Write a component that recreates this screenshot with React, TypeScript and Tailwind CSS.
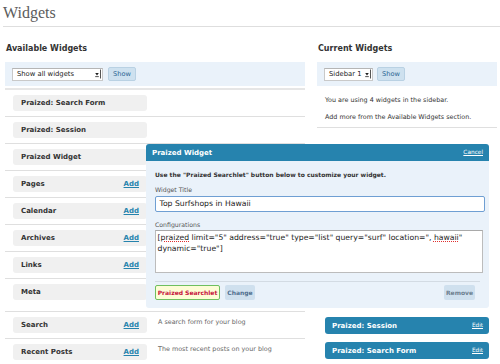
import React from "react";

function SelectBox({ label, className }: { label: string; className: string }) {
  return (
    <div
      className={
        "h-[13px] bg-white border border-[#c9c9c9] border-t-[#b5b5b5] flex items-center justify-between pl-[4px] pr-[1px] text-[6.8px] leading-none text-[#222] " +
        className
      }
    >
      <span>{label}</span>
      <svg width="7" height="10" viewBox="0 0 7 10">
        <path d="M1.2 4 L4.8 4 L3 6.4 Z" fill="#222" />
        <rect x="1.2" y="7.2" width="3.6" height="0.9" fill="#444" />
        <rect x="6" y="0.5" width="1" height="9" fill="#555" />
      </svg>
    </div>
  );
}

function ShowButton() {
  return (
    <div className="h-[14px] w-[28px] flex items-center justify-center rounded-[2px] bg-[#cee1ef] border border-[#b9d1e3] text-[6.6px] leading-none text-[#2a6592]">
      Show
    </div>
  );
}

type Row = { name: string; add?: boolean; desc?: React.ReactNode };

const rows: Row[] = [
  { name: "Praized: Search Form" },
  { name: "Praized: Session" },
  { name: "Praized Widget" },
  { name: "Pages", add: true },
  { name: "Calendar", add: true },
  { name: "Archives", add: true },
  { name: "Links", add: true },
  {
    name: "Meta",
    desc: (
      <>
        Log in/out, admin, feed and
        <br />
        WordPress links
      </>
    ),
  },
  { name: "Search", add: true, desc: "A search form for your blog" },
  { name: "Recent Posts", add: true, desc: "The most recent posts on your blog" },
];

function LeftColumn() {
  return (
    <div className="w-[300px] shrink-0">
      <h3 className="pt-[17px] text-[8px] leading-[10px] font-bold text-[#333] pl-[1px]">Available Widgets</h3>
      <div className="mt-[8px] h-[24px] bg-[#eaf2fa] flex items-center pl-[7px]">
        <SelectBox label="Show all widgets" className="w-[91px]" />
        <div className="ml-[5px]">
          <ShowButton />
        </div>
      </div>
      <ul className="mt-[2px] border-t-2 border-[#e6e6e6]">
        {rows.map((r) => (
          <li key={r.name} className="flex items-start pt-[5px] pb-[5px] border-b border-[#dfdfdf]">
            <div className="ml-[8px] w-[134px] h-[16px] shrink-0 rounded-[3px] bg-[#f0f0f0] flex items-center justify-between pl-[8px] pr-[8px] pt-[1px]">
              <span className="text-[7px] leading-none font-bold text-[#333]">{r.name}</span>
              {r.add && (
                <span className="text-[7px] leading-none font-bold text-[#2583ad] underline">Add</span>
              )}
            </div>
            {r.desc && (
              <p className="ml-[11px] text-[6.4px] leading-[11px] text-[#666]">{r.desc}</p>
            )}
          </li>
        ))}
      </ul>
    </div>
  );
}

function PraizedPanel() {
  return (
    <div className="relative z-10 ml-[-179px]">
      <div className="h-[17px] rounded-t-[3px] bg-[#2683ae] flex items-center justify-between pl-[6px] pr-[6px] pt-[1px]">
        <span className="text-[7px] leading-none font-bold text-white">Praized Widget</span>
        <span className="text-[5.8px] leading-none text-white underline">Cancel</span>
      </div>
      <div className="bg-[#eaf2fa] rounded-b-[3px] pl-[9px] pr-[4px] pt-[9px] pb-[8px]">
        <p className="text-[6px] leading-[10px] font-bold text-[#333]">
          Use the "Praized Searchlet" button below to customize your widget.
        </p>
        <p className="mt-[5px] text-[6.2px] leading-[10px] text-[#555]">Widget Title</p>
        <div className="mt-[1px] h-[16px] bg-white border-[1.5px] border-[#6f9fd3] rounded-[2px] flex items-center pl-[3.5px] text-[7.7px] leading-none text-[#222]">
          Top Surfshops in Hawaii
        </div>
        <p className="mt-[8px] text-[6.2px] leading-[10px] text-[#555]">Configurations</p>
        <div className="h-[43px] mr-[2px] bg-white border border-[#bcbcbc] border-t-[#a9a9a9] pl-[1.5px] pt-[2px] text-[7.7px] leading-[10.7px] text-[#222]">
          [<span className="underline decoration-dotted decoration-[#e03030]">praized</span> limit="5" address="true" type="list" query="surf" location=", <span className="underline decoration-dotted decoration-[#e03030]">hawaii</span>"
          <br />
          dynamic="true"]
        </div>
        <div className="mt-[8px] mr-[5px] border-t border-[#d3dbe3]" />
        <div className="mt-[3px] mr-[10px] flex items-center">
          <div className="h-[15px] w-[65px] flex items-center justify-center rounded-[2px] bg-[#fdfdd6] border-[1.5px] border-[#6fbf5f] text-[6px] leading-none font-bold text-[#c5123c]">
            Praized Searchlet
          </div>
          <div className="ml-[5px] h-[15px] w-[30px] flex items-center justify-center rounded-[2px] bg-[#cfe0ee] text-[6px] leading-none font-bold text-[#4f6f8e]">
            Change
          </div>
          <div className="ml-auto h-[15px] w-[31px] flex items-center justify-center rounded-[2px] bg-[#cfe0ee] text-[6px] leading-none font-bold text-[#6d7f8e]">
            Remove
          </div>
        </div>
      </div>
    </div>
  );
}

function SidebarWidget({ name, className }: { name: string; className: string }) {
  return (
    <div
      className={
        "h-[17px] rounded-[3px] bg-[#2683ae] flex items-center justify-between pl-[7px] pr-[6px] pt-[1px] " + className
      }
    >
      <span className="text-[7px] leading-none font-bold text-white">{name}</span>
      <span className="text-[5.7px] leading-none text-white underline">Edit</span>
    </div>
  );
}

function RightColumn() {
  return (
    <div className="w-[180px] shrink-0">
      <h3 className="pt-[17px] text-[8px] leading-[10px] font-bold text-[#333] pl-[1px]">Current Widgets</h3>
      <div className="mt-[8px] h-[24px] bg-[#eaf2fa] flex items-center pl-[7px]">
        <SelectBox label="Sidebar 1" className="w-[49px]" />
        <div className="ml-[4px]">
          <ShowButton />
        </div>
      </div>
      <div className="pl-[8px] pb-[5px] border-b border-[#dfdfdf]">
        <p className="mt-[9px] text-[6.4px] leading-[10px] text-[#333]">You are using 4 widgets in the sidebar.</p>
        <p className="mt-[7px] text-[6.4px] leading-[10px] text-[#333]">Add more from the Available Widgets section.</p>
      </div>
      <div className="pt-[16px] pl-[8px] pr-[8px]">
        <PraizedPanel />
        <SidebarWidget name="Praized: Session" className="mt-[9px]" />
        <SidebarWidget name="Praized: Search Form" className="mt-[8px]" />
      </div>
    </div>
  );
}

export default function App() {
  return (
    <div className="w-[500px] h-[364px] overflow-hidden bg-white font-['DejaVu_Sans',sans-serif] text-[#333]">
      <div className="ml-[3px] pt-[5px] pb-[5px] border-b border-[#dedede]">
        <h2 className="font-['Liberation_Serif',serif] text-[16px] leading-[16px] text-[#5c5c5c]">Widgets</h2>
      </div>
      <div className="flex pl-[5px] gap-[12px]">
        <LeftColumn />
        <RightColumn />
      </div>
    </div>
  );
}
